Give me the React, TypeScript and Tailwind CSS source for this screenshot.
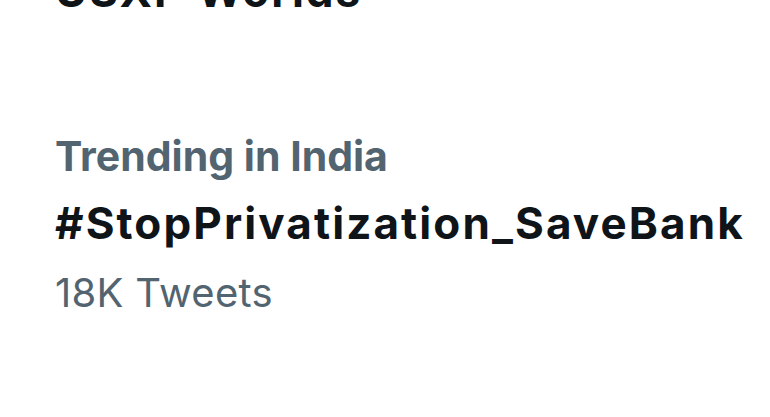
export default function App() {
  return (
    <div className="w-[770px] h-[417px] bg-white overflow-hidden font-['Inter',sans-serif]">
      <div className="flex flex-col pl-[55px]">
        <div className="mt-[-39px] text-[44px] leading-[60px] font-bold text-[#0f1419] tracking-[2px] whitespace-nowrap">USXP Worlds</div>
        <div className="mt-[105px] text-[41px] leading-[60px] font-bold text-[#536471] whitespace-nowrap">Trending in India</div>
        <div className="mt-[4px] text-[44px] leading-[66px] font-bold text-[#0f1419] tracking-[2.1px] whitespace-nowrap">#StopPrivatization_SaveBank</div>
        <div className="text-[40px] leading-[74px] font-normal text-[#536471] tracking-[0.3px] whitespace-nowrap">18K Tweets</div>
      </div>
    </div>
  );
}
